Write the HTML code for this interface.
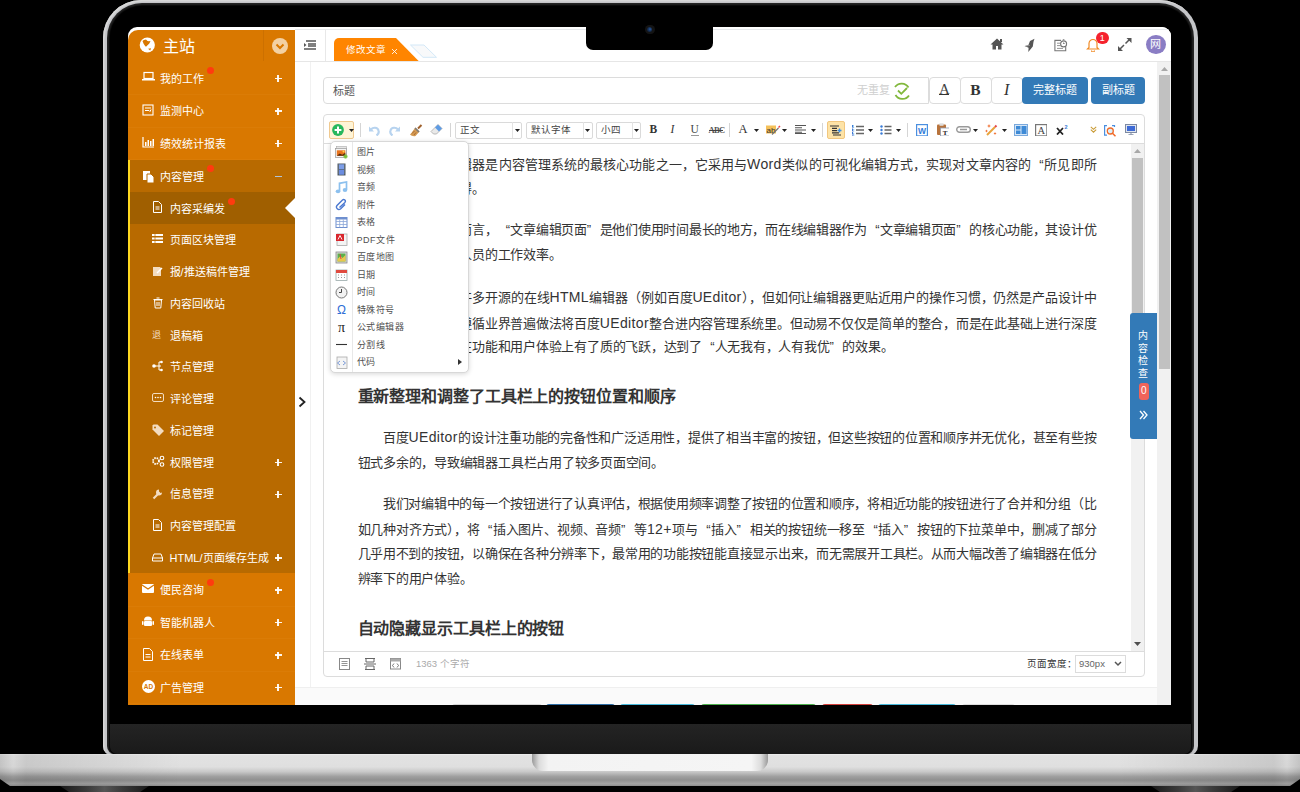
<!DOCTYPE html>
<html lang="zh-CN"><head><meta charset="utf-8"><style>
*{box-sizing:border-box;margin:0;padding:0}
html,body{width:1300px;height:792px;overflow:hidden;background:#000;font-family:"Liberation Sans",sans-serif}
.a{position:absolute}
.nw{white-space:nowrap}
#lid{left:103px;top:0;width:1095px;height:756px;border-radius:38px 38px 10px 10px;background:#c4c5c8;box-shadow:inset 1.5px 1.5px 1px #d8d8d8}
#lidin{left:107px;top:3px;width:1087px;height:751px;border-radius:35px 35px 8px 8px;background:#262626}
#lidin2{left:110px;top:6px;width:1081px;height:748px;border-radius:32px 32px 6px 6px;background:#000;box-shadow:0 0 2px 1px #000}
#chin{left:110px;top:724px;width:1081px;height:30px;border-radius:0 0 7px 7px;background:linear-gradient(180deg,#242424,#1a1a1a)}
#base{left:0;top:754px;width:1300px;height:32px;background:linear-gradient(90deg,rgba(0,0,0,.13) 0,rgba(0,0,0,.04) 1%,rgba(0,0,0,.1) 2%,rgba(0,0,0,0) 14%,rgba(0,0,0,0) 86%,rgba(0,0,0,.1) 98%,rgba(0,0,0,.04) 99%,rgba(0,0,0,.13) 100%),linear-gradient(180deg,#efefef 0,#e2e2e2 5%,#dfdfdf 40%,#c9c9c9 55%,#a0a0a0 70%,#8f8f8f 82%,#a3a3a3 93%,#8c8c8c 100%);clip-path:polygon(0 0,100% 0,100% 78%,calc(100% - 10px) 100%,10px 100%,0 78%)}
#notch{left:532px;top:754px;width:236px;height:16.5px;border-radius:0 0 11px 11px;background:linear-gradient(90deg,#9a9a9a 0%,#dcdcdc 3%,#f3f3f3 7%,#f5f5f5 93%,#dcdcdc 97%,#9a9a9a 100%)}
.foot{top:786px;width:89px;height:6px;background:linear-gradient(90deg,#1a1a1a,#3a3a3a 30%,#555 50%,#3a3a3a 70%,#1a1a1a);clip-path:polygon(0 0,100% 0,90% 100%,10% 100%)}
#screen{left:128px;top:27px;width:1043px;height:678px;overflow:hidden;border-radius:9px 9px 0 0;background:#fff}
#pg{left:-128px;top:-27px;width:1300px;height:792px}
.si{color:#fff;font-size:11px;white-space:nowrap}
.pl{color:#fff;font-size:14px;font-weight:bold;line-height:14px}
.dot{width:7px;height:7px;border-radius:50%;background:#ff3b0f}

.tb{font-size:9.5px;color:#454545;white-space:nowrap}
.bt{border:1px solid #ddd;background:#fff}
.txt{font-size:12.75px;color:#333;white-space:nowrap;line-height:18px}
.jl{text-align:justify;text-align-last:justify}
.mi{font-size:9px;letter-spacing:.5px;color:#505050;white-space:nowrap;line-height:14px}
.ql{display:inline-block;width:12.7px;text-align:right;text-align-last:right;letter-spacing:0}.qr{display:inline-block;width:12.7px;text-align:left;text-align-last:left;letter-spacing:0}.lt{font-size:14px;letter-spacing:.35px}</style></head><body>
<div id="lid" class="a"></div><div id="lidin" class="a"></div><div id="lidin2" class="a"></div>
<div id="chin" class="a"></div><div id="base" class="a"></div><div id="notch" class="a"></div>
<div class="a foot" style="left:60px"></div><div class="a foot" style="left:1151px"></div>
<div id="screen" class="a"><div id="pg" class="a">
<div class="a" style="left:128px;top:29.8px;width:167px;height:676px;background:#d97800;border-radius:10px 0 0 0"></div>
<div class="a" style="left:262.5px;top:30px;width:1px;height:31px;background:#cc7000"></div>
<svg class="a" style="left:139px;top:37px" width="17" height="17" viewBox="0 0 17 17"><circle cx="8.3" cy="8" r="7.6" fill="#fff"/><path d="M3.5 4L4.9 2.9 7 2.4 8.5 4 9.7 4.3 11.5 4.1 10.3 6.4 8.5 8.2 7 9.7 6.1 9.1 4.6 6.7z" fill="#d97800"/><path d="M9.1 11.8l3-.6-.9 2.2z" fill="#d97800"/></svg>
<div class="a nw" style="left:163px;top:34.5px;font-size:16px;line-height:24px;color:#fff">主站</div>
<svg class="a" style="left:271.5px;top:37.5px" width="16" height="16" viewBox="0 0 16 16"><circle cx="8" cy="8" r="8" fill="#f3d1a3"/><path d="M4.5 6.5L8 10l3.5-3.5" stroke="#d97800" stroke-width="2" fill="none"/></svg>
<div class="a" style="left:128px;top:94.0px;width:167px;height:1px;background:#db7c06"></div>
<svg class="a" style="left:142px;top:71.2px" width="13" height="13" viewBox="0 0 13 13"><rect x="2" y="1.5" width="9" height="6" fill="none" stroke="#fff" stroke-width="1.2"/><rect x="0" y="8" width="13" height="1.5" fill="#fff"/></svg>
<div class="a si" style="left:160px;top:70.55px;line-height:16px">我的工作</div>
<div class="a" style="left:274.5px;top:77.95px;width:7px;height:1.3px;background:#fff;opacity:.93"></div><div class="a" style="left:277.35px;top:75.05px;width:1.3px;height:7px;background:#fff;opacity:.93"></div>
<div class="a dot" style="left:207.1px;top:66.5px"></div>
<div class="a" style="left:128px;top:126.5px;width:167px;height:1px;background:#db7c06"></div>
<svg class="a" style="left:142px;top:103.8px" width="13" height="13" viewBox="0 0 13 13"><rect x="1" y="1" width="10" height="10" fill="none" stroke="#fff" stroke-width="1.1"/><path d="M3 4h6M3 6.5h4l1 1 1-2" stroke="#fff" stroke-width="1" fill="none"/></svg>
<div class="a si" style="left:160px;top:103.05px;line-height:16px">监测中心</div>
<div class="a" style="left:274.5px;top:110.45px;width:7px;height:1.3px;background:#fff;opacity:.93"></div><div class="a" style="left:277.35px;top:107.55px;width:1.3px;height:7px;background:#fff;opacity:.93"></div>
<div class="a" style="left:128px;top:159.0px;width:167px;height:1px;background:#db7c06"></div>
<svg class="a" style="left:142px;top:136.2px" width="13" height="13" viewBox="0 0 13 13"><path d="M1 1v10h11" stroke="#fff" stroke-width="1.2" fill="none"/><rect x="3" y="6" width="1.5" height="4" fill="#fff"/><rect x="5.5" y="4" width="1.5" height="6" fill="#fff"/><rect x="8" y="5" width="1.5" height="5" fill="#fff"/><rect x="10.5" y="3" width="1.5" height="7" fill="#fff"/></svg>
<div class="a si" style="left:160px;top:135.55px;line-height:16px">绩效统计报表</div>
<div class="a" style="left:274.5px;top:142.95px;width:7px;height:1.3px;background:#fff;opacity:.93"></div><div class="a" style="left:277.35px;top:140.05px;width:1.3px;height:7px;background:#fff;opacity:.93"></div>
<div class="a" style="left:128px;top:159.5px;width:167px;height:413.5px;background:#b86a00"></div>
<div class="a" style="left:128px;top:192px;width:167px;height:31.75px;background:#a05f00"></div>
<div class="a" style="left:128px;top:159.5px;width:2.2px;height:413.5px;background:#ffd91f"></div>
<svg class="a" style="left:142px;top:169.5px" width="13" height="13" viewBox="0 0 13 13"><rect x="1" y="1" width="7" height="9" fill="#fff"/><path d="M5 4h4l3 3v6H5z" fill="#fff" stroke="#b86a00" stroke-width="1"/></svg>
<div class="a si" style="left:160px;top:168.8px;line-height:16px">内容管理</div>
<div class="a" style="left:275px;top:176.2px;width:6.5px;height:1.2px;background:#b0c4d8"></div>
<div class="a dot" style="left:206.9px;top:164.5px"></div>
<svg class="a" style="left:151.5px;top:201.4px" width="13" height="13" viewBox="0 0 13 13"><path d="M1.5 .5h5l3 3v8h-8z" fill="none" stroke="#fff" stroke-width="1"/><path d="M3.5 6h4M3.5 8h4" stroke="#fff" stroke-width="1"/></svg>
<div class="a si" style="left:169.5px;top:200.675px;line-height:16px">内容采编发</div>
<div class="a dot" style="left:227.9px;top:197.5px"></div>
<svg class="a" style="left:151.5px;top:233.1px" width="13" height="13" viewBox="0 0 13 13"><rect x="0" y="1" width="11" height="2" fill="#fff"/><rect x="0" y="4.5" width="11" height="2" fill="#fff"/><rect x="0" y="8" width="11" height="2" fill="#fff"/><path d="M3 1v9" stroke="#b86a00" stroke-width=".7"/></svg>
<div class="a si" style="left:169.5px;top:232.425px;line-height:16px">页面区块管理</div>
<svg class="a" style="left:151.5px;top:264.9px" width="13" height="13" viewBox="0 0 13 13"><path d="M1 2h7l1 1v8H1z" fill="#f3dcc0"/><path d="M5 8l5-5" stroke="#fff" stroke-width="1.5"/></svg>
<div class="a si" style="left:169.5px;top:264.175px;line-height:16px">报/推送稿件管理</div>
<svg class="a" style="left:151.5px;top:296.6px" width="13" height="13" viewBox="0 0 13 13"><path d="M2.5 3h7l-.7 8h-5.6z" fill="none" stroke="#fff" stroke-width="1"/><path d="M1.5 2.5h9M4.5 1h3M5 5v4M7 5v4" stroke="#fff" stroke-width="1"/></svg>
<div class="a si" style="left:169.5px;top:295.925px;line-height:16px">内容回收站</div>
<svg class="a" style="left:151.5px;top:328.4px" width="13" height="13" viewBox="0 0 13 13"><text x="0" y="10" font-size="9" fill="#f3dcc0">退</text></svg>
<div class="a si" style="left:169.5px;top:327.675px;line-height:16px">退稿箱</div>
<svg class="a" style="left:151.5px;top:360.1px" width="13" height="13" viewBox="0 0 13 13"><circle cx="2" cy="6" r="1.8" fill="#fff"/><path d="M3 6h4M7 2v8M7 2h2M7 6h2M7 10h2" stroke="#fff" stroke-width="1"/><circle cx="9.5" cy="2" r="1.3" fill="#fff"/><circle cx="9.5" cy="10" r="1.3" fill="#fff"/></svg>
<div class="a si" style="left:169.5px;top:359.425px;line-height:16px">节点管理</div>
<svg class="a" style="left:151.5px;top:391.9px" width="13" height="13" viewBox="0 0 13 13"><rect x=".5" y="1.5" width="11" height="8" rx="1.5" fill="none" stroke="#f3dcc0" stroke-width="1"/><circle cx="3.5" cy="5.5" r=".8" fill="#fff"/><circle cx="6" cy="5.5" r=".8" fill="#fff"/><circle cx="8.5" cy="5.5" r=".8" fill="#fff"/></svg>
<div class="a si" style="left:169.5px;top:391.175px;line-height:16px">评论管理</div>
<svg class="a" style="left:151.5px;top:423.6px" width="13" height="13" viewBox="0 0 13 13"><path d="M.5 1.5v4l6.5 6.5 5-5L5.5.5h-4z" fill="#f3dcc0"/><circle cx="3" cy="3.5" r="1" fill="#b86a00"/></svg>
<div class="a si" style="left:169.5px;top:422.925px;line-height:16px">标记管理</div>
<svg class="a" style="left:151.5px;top:455.4px" width="13" height="13" viewBox="0 0 13 13"><circle cx="4" cy="6" r="3" fill="none" stroke="#fff" stroke-width="1.8" stroke-dasharray="1.5 .9"/><circle cx="10" cy="3" r="1.8" fill="none" stroke="#fff" stroke-width="1.1"/><circle cx="10" cy="9.5" r="1.8" fill="none" stroke="#fff" stroke-width="1.1"/></svg>
<div class="a si" style="left:169.5px;top:454.675px;line-height:16px">权限管理</div>
<div class="a" style="left:274.5px;top:462.075px;width:7px;height:1.3px;background:#fff;opacity:.93"></div><div class="a" style="left:277.35px;top:459.175px;width:1.3px;height:7px;background:#fff;opacity:.93"></div>
<svg class="a" style="left:151.5px;top:487.1px" width="13" height="13" viewBox="0 0 13 13"><path d="M1.5 11.5l6-6" stroke="#f3dcc0" stroke-width="2.2"/><path d="M7 2.5a3 3 0 1 0 3 3l-1.5 .5-1.5-1.5z" fill="#f3dcc0"/></svg>
<div class="a si" style="left:169.5px;top:486.425px;line-height:16px">信息管理</div>
<div class="a" style="left:274.5px;top:493.825px;width:7px;height:1.3px;background:#fff;opacity:.93"></div><div class="a" style="left:277.35px;top:490.925px;width:1.3px;height:7px;background:#fff;opacity:.93"></div>
<svg class="a" style="left:151.5px;top:518.9px" width="13" height="13" viewBox="0 0 13 13"><path d="M1.5 .5h5l3 3v8h-8z" fill="none" stroke="#fff" stroke-width="1"/><path d="M3.5 6h4M3.5 8h4" stroke="#fff" stroke-width="1"/></svg>
<div class="a si" style="left:169.5px;top:518.175px;line-height:16px">内容管理配置</div>
<svg class="a" style="left:151.5px;top:550.6px" width="13" height="13" viewBox="0 0 13 13"><path d="M2 3h7l1.5 4v3h-10V7z" fill="none" stroke="#fff" stroke-width="1"/><path d="M1 7h10" stroke="#fff" stroke-width="1"/></svg>
<div class="a si" style="left:169.5px;top:549.925px;line-height:16px">HTML/页面缓存生成</div>
<div class="a" style="left:274.5px;top:557.325px;width:7px;height:1.3px;background:#fff;opacity:.93"></div><div class="a" style="left:277.35px;top:554.425px;width:1.3px;height:7px;background:#fff;opacity:.93"></div>
<svg class="a" style="left:285px;top:198px" width="10" height="20" viewBox="0 0 10 20"><path d="M10 0L0 10l10 10z" fill="#fff"/></svg>
<div class="a" style="left:128px;top:605.5px;width:167px;height:1px;background:#db7c06"></div>
<svg class="a" style="left:142px;top:582.8px" width="13" height="13" viewBox="0 0 13 13"><rect x="0" y="1" width="12" height="9" rx="1" fill="#fff"/><path d="M0 2l6 4 6-4" stroke="#d97800" stroke-width="1.2" fill="none"/></svg>
<div class="a si" style="left:160px;top:582.05px;line-height:16px">便民咨询</div>
<div class="a" style="left:274.5px;top:589.45px;width:7px;height:1.3px;background:#fff;opacity:.93"></div><div class="a" style="left:277.35px;top:586.55px;width:1.3px;height:7px;background:#fff;opacity:.93"></div>
<div class="a dot" style="left:207.3px;top:578.5px"></div>
<div class="a" style="left:128px;top:638.0px;width:167px;height:1px;background:#db7c06"></div>
<svg class="a" style="left:142px;top:615.2px" width="13" height="13" viewBox="0 0 13 13"><path d="M2 5.5a4 4 0 0 1 8 0z" fill="#fff"/><rect x="2" y="6" width="8" height="5" rx="1" fill="#fff"/><rect x="0" y="6" width="1.5" height="4" rx=".7" fill="#fff"/><rect x="10.5" y="6" width="1.5" height="4" rx=".7" fill="#fff"/></svg>
<div class="a si" style="left:160px;top:614.55px;line-height:16px">智能机器人</div>
<div class="a" style="left:274.5px;top:621.95px;width:7px;height:1.3px;background:#fff;opacity:.93"></div><div class="a" style="left:277.35px;top:619.05px;width:1.3px;height:7px;background:#fff;opacity:.93"></div>
<div class="a" style="left:128px;top:670.5px;width:167px;height:1px;background:#db7c06"></div>
<svg class="a" style="left:142px;top:647.8px" width="13" height="13" viewBox="0 0 13 13"><path d="M1.5 .5h6l3 3v9h-9z" fill="none" stroke="#fff" stroke-width="1"/><path d="M3.5 6.5h5M3.5 9h5" stroke="#fff" stroke-width="1"/></svg>
<div class="a si" style="left:160px;top:647.05px;line-height:16px">在线表单</div>
<div class="a" style="left:274.5px;top:654.45px;width:7px;height:1.3px;background:#fff;opacity:.93"></div><div class="a" style="left:277.35px;top:651.55px;width:1.3px;height:7px;background:#fff;opacity:.93"></div>
<div class="a" style="left:128px;top:703.0px;width:167px;height:1px;background:#db7c06"></div>
<svg class="a" style="left:142px;top:680.2px" width="13" height="13" viewBox="0 0 13 13"><circle cx="6.5" cy="6.5" r="6.5" fill="#fff"/><text x="6.5" y="9" font-size="6.5" font-weight="bold" text-anchor="middle" fill="#d97800" font-family="Liberation Sans">AD</text></svg>
<div class="a si" style="left:160px;top:679.55px;line-height:16px">广告管理</div>
<div class="a" style="left:274.5px;top:686.95px;width:7px;height:1.3px;background:#fff;opacity:.93"></div><div class="a" style="left:277.35px;top:684.05px;width:1.3px;height:7px;background:#fff;opacity:.93"></div>
<div class="a" style="left:295px;top:27px;width:876px;height:678px;background:#fff"></div>
<div class="a" style="left:295px;top:28.8px;width:876px;height:1px;background:#e6e9ed"></div>
<div class="a" style="left:295px;top:61px;width:876px;height:1px;background:#e6e6e6"></div>
<div class="a" style="left:325px;top:29px;width:1px;height:32px;background:#e8e8e8"></div>
<svg class="a" style="left:303px;top:40px" width="14" height="10" viewBox="0 0 14 10"><path d="M3 1h10M5 4h8M5 6h8M1 9h12" stroke="#555" stroke-width="1.3"/><path d="M1 3l2.5 2L1 7z" fill="#555"/></svg>
<svg class="a" style="left:333.5px;top:37.8px" width="86" height="23.7" viewBox="0 0 86 23.7"><path d="M0 23.7V5a5 5 0 0 1 5-5h57l23.3 23.7z" fill="#ff8500"/></svg>
<div class="a nw" style="left:345.5px;top:42.8px;font-size:9.5px;line-height:14px;color:#fff">修改文章</div>
<svg class="a" style="left:391px;top:47.5px" width="7" height="7" viewBox="0 0 7 7"><path d="M1 1l5 5M6 1l-5 5" stroke="#fff" stroke-width=".85"/></svg>
<svg class="a" style="left:409px;top:43.5px" width="30" height="15" viewBox="0 0 30 15"><path d="M1.5 1h13.5l12.5 12.3h-13.5z" fill="#f8f9fa" stroke="#d3e8f7" stroke-width="1" stroke-linejoin="round"/></svg>
<svg class="a" style="left:990px;top:38px" width="14" height="12" viewBox="0 0 14 12"><path d="M7 .5L.5 6.5h2v5h3.5V8h2v3.5h3.5v-5h2z" fill="#555"/><rect x="10" y="1" width="2" height="3" fill="#555"/></svg>
<svg class="a" style="left:1022px;top:37px" width="14" height="16" viewBox="0 0 14 16"><path d="M12.5 1.7L8 4.1 6.3 8.2 2.5 8.9 6.6 10.7 6.3 15 10.8 9.6 11.5 4.8z" fill="#555"/><path d="M4 9.3l4-1" stroke="#aaa" stroke-width=".6"/></svg>
<svg class="a" style="left:1053px;top:38px" width="15" height="14" viewBox="0 0 15 14"><path d="M8 2.4H1.9v10.4h10.8V9" fill="none" stroke="#777" stroke-width="1.1"/><path d="M4 5.2h3M4 7.6h3.5M4 10.4h6" stroke="#888" stroke-width=".9"/><circle cx="10.6" cy="5.9" r="3" fill="#fff" stroke="#777" stroke-width="1.1"/><path d="M10.6 4.5v1.5l1-1M9.8 1.7h1.6" stroke="#777" stroke-width=".9" fill="none"/></svg>
<svg class="a" style="left:1086px;top:38px" width="14" height="14" viewBox="0 0 14 14"><path d="M7 1.5a4 4 0 0 0-4 4v4L1.5 11h11L11 9.5v-4a4 4 0 0 0-4-4z" fill="none" stroke="#f08a24" stroke-width="1.2"/><path d="M5.5 12.5a1.5 1.5 0 0 0 3 0" stroke="#f08a24" stroke-width="1.1" fill="none"/></svg>
<div class="a" style="left:1096px;top:31.5px;width:12.5px;height:12.5px;border-radius:50%;background:#f5222d;color:#fff;font-size:9px;line-height:12.5px;text-align:center">1</div>
<svg class="a" style="left:1117px;top:37px" width="15" height="15" viewBox="0 0 15 15"><path d="M8.5 6.5l5-5M2 13l5-5" stroke="#555" stroke-width="1.5"/><path d="M9.5 1h5v5z M1 9v5h5z" fill="#555"/></svg>
<div class="a" style="left:1146px;top:35px;width:19.5px;height:19px;border-radius:50%;background:#8a7dc4;color:#fff;font-size:11px;line-height:19px;text-align:center">网</div>
<div class="a" style="left:310px;top:62px;width:1px;height:625px;background:#f1f1f1"></div>
<div class="a" style="left:295px;top:687px;width:862px;height:18px;background:#fafafa;border-top:1px solid #efefef"></div>
<div class="a" style="left:1157px;top:62px;width:14px;height:643px;background:#f1f1f1"></div>
<svg class="a" style="left:1160.5px;top:67px" width="7" height="4" viewBox="0 0 7 4"><path d="M0 4L3.5 0 7 4z" fill="#a8a8a8"/></svg>
<div class="a" style="left:1159px;top:75px;width:10.5px;height:294px;background:#c1c1c1"></div>
<div class="a" style="left:322.5px;top:77px;width:606px;height:26.5px;border:1px solid #dcdcdc;border-radius:4px 0 0 4px"></div>
<div class="a nw" style="left:333px;top:84px;font-size:11px;line-height:14px;color:#555">标题</div>
<div class="a nw" style="left:856.5px;top:83px;font-size:11px;line-height:14px;color:#cfcfcf">无重复</div>
<svg class="a" style="left:892px;top:81px" width="20" height="20" viewBox="0 0 20 20"><path d="M16.5 6.5A8 8 0 0 0 3 6M3.5 14a8 8 0 0 0 13.5 .5" stroke="#82b83d" stroke-width="1.8" fill="none"/><path d="M6 9.5l3.3 3.3L15 7" stroke="#82b83d" stroke-width="1.8" fill="none"/></svg>
<div class="a" style="left:928.5px;top:76.5px;width:32.0px;height:27px;border:1.3px solid #dcdcdc;border-radius:4px;background:#fff;text-align:center;line-height:23px;color:#333;font-family:Liberation Serif;font-size:15px;color:#444">A</div>
<div class="a" style="left:959.5px;top:76.5px;width:32.0px;height:27px;border:1.3px solid #dcdcdc;border-radius:4px;background:#fff;text-align:center;line-height:23px;color:#333;font-family:Liberation Serif;font-weight:bold;font-size:15.5px">B</div>
<div class="a" style="left:990.5px;top:76.5px;width:32.5px;height:27px;border:1.3px solid #dcdcdc;border-radius:4px;background:#fff;text-align:center;line-height:23px;color:#333;font-family:Liberation Serif;font-style:italic;font-size:16px">I</div>
<div class="a" style="left:938.5px;top:93.6px;width:10.5px;height:1.8px;background:#333"></div>
<div class="a" style="left:1022px;top:76.5px;width:65.5px;height:27px;border-radius:4px;background:#337ab7;color:#fff;font-size:11px;line-height:27px;text-align:center">完整标题</div>
<div class="a" style="left:1091px;top:76.5px;width:54px;height:27px;border-radius:4px;background:#337ab7;color:#fff;font-size:11px;line-height:27px;text-align:center">副标题</div>
<div class="a" style="left:322.5px;top:113.5px;width:822px;height:563px;border:1px solid #dcdcdc;border-radius:4px"></div>
<div class="a" style="left:323px;top:143px;width:821px;height:1px;background:#dcdcdc"></div>
<div class="a" style="left:323px;top:651px;width:821px;height:1px;background:#dcdcdc"></div>
<div class="a" style="left:1131px;top:144px;width:13px;height:507px;background:#f1f1f1"></div>
<svg class="a" style="left:1134px;top:149px" width="7" height="4" viewBox="0 0 7 4"><path d="M0 4L3.5 0 7 4z" fill="#a8a8a8"/></svg>
<svg class="a" style="left:1134px;top:642px" width="7" height="4" viewBox="0 0 7 4"><path d="M0 0l3.5 4L7 0z" fill="#505050"/></svg>
<div class="a" style="left:1132px;top:158px;width:10.5px;height:240px;background:#c1c1c1"></div>
<svg class="a" style="left:298px;top:396px" width="9" height="12" viewBox="0 0 9 12"><path d="M1.5 1.5L6.5 6l-5 4.5" stroke="#222" stroke-width="1.8" fill="none"/></svg>
<div class="a txt jl" style="left:459.3px;top:155.20000000000002px;width:636.7px;font-size:13px;letter-spacing:-0.6px;color:#333">辑器是内容管理系统的最核心功能之一，它采用与<span class="lt">Word</span>类似的可视化编辑方式，实现对文章内容的<span class="ql">“</span>所见即所</div>
<div class="a txt" style="left:459.3px;top:180.3px;font-size:13px;letter-spacing:-0.23px;color:#333">得。</div>
<div class="a txt jl" style="left:459.3px;top:221.10000000000002px;width:636.7px;font-size:13px;letter-spacing:-0.6px;color:#333">而言，<span class="ql">“</span>文章编辑页面<span class="qr">”</span>是他们使用时间最长的地方，而在线编辑器作为<span class="ql">“</span>文章编辑页面<span class="qr">”</span>的核心功能，其设计优</div>
<div class="a txt" style="left:459.3px;top:246.10000000000002px;font-size:13px;letter-spacing:-0.23px;color:#333">人员的工作效率。</div>
<div class="a txt jl" style="left:459.3px;top:287.90000000000003px;width:636.7px;font-size:13px;letter-spacing:-0.6px;color:#333">许多开源的在线<span class="lt">HTML</span>编辑器（例如百度<span class="lt">UEditor</span>），但如何让编辑器更贴近用户的操作习惯，仍然是产品设计中</div>
<div class="a txt jl" style="left:459.3px;top:313.5px;width:636.7px;font-size:13px;letter-spacing:-0.6px;color:#333">遵循业界普遍做法将百度<span class="lt">UEditor</span>整合进内容管理系统里。但动易不仅仅是简单的整合，而是在此基础上进行深度</div>
<div class="a txt" style="left:459.3px;top:338.3px;font-size:13px;letter-spacing:-0.23px;color:#333">在功能和用户体验上有了质的飞跃，达到了<span class="ql">“</span>人无我有，人有我优<span class="qr">”</span>的效果。</div>
<div class="a txt" style="left:357.5px;top:388.1px;font-size:16px;letter-spacing:-0.1px;font-weight:bold;color:#333">重新整理和调整了工具栏上的按钮位置和顺序</div>
<div class="a txt jl" style="left:383px;top:428.3px;width:713px;font-size:13px;letter-spacing:-0.6px;color:#333">百度<span class="lt">UEditor</span>的设计注重功能的完备性和广泛适用性，提供了相当丰富的按钮，但这些按钮的位置和顺序并无优化，甚至有些按</div>
<div class="a txt" style="left:357.5px;top:453.5px;font-size:13px;letter-spacing:-0.23px;color:#333">钮式多余的，导致编辑器工具栏占用了较多页面空间。</div>
<div class="a txt jl" style="left:383px;top:495.1px;width:713px;font-size:13px;letter-spacing:-0.6px;color:#333">我们对编辑中的每一个按钮进行了认真评估，根据使用频率调整了按钮的位置和顺序，将相近功能的按钮进行了合并和分组（比</div>
<div class="a txt jl" style="left:357.5px;top:520.0999999999999px;width:738.5px;font-size:13px;letter-spacing:-0.6px;color:#333">如几种对齐方式），将<span class="ql">“</span>插入图片、视频、音频<span class="qr">”</span>等<span class="lt">12+</span>项与<span class="ql">“</span>插入<span class="qr">”</span>相关的按钮统一移至<span class="ql">“</span>插入<span class="qr">”</span>按钮的下拉菜单中，删减了部分</div>
<div class="a txt jl" style="left:357.5px;top:545.4px;width:738.5px;font-size:13px;letter-spacing:-0.6px;color:#333">几乎用不到的按钮，以确保在各种分辨率下，最常用的功能按钮能直接显示出来，而无需展开工具栏。从而大幅改善了编辑器在低分</div>
<div class="a txt" style="left:357.5px;top:570.3px;font-size:13px;letter-spacing:-0.23px;color:#333">辨率下的用户体验。</div>
<div class="a txt" style="left:357.5px;top:620.3px;font-size:16px;letter-spacing:-0.1px;font-weight:bold;color:#333">自动隐藏显示工具栏上的按钮</div>
<div class="a" style="left:329px;top:121px;width:25px;height:17.5px;background:#fff4d6;border:1px solid #f0c98f;border-radius:2px"></div>
<svg class="a" style="left:331.5px;top:123.5px" width="12" height="12" viewBox="0 0 12 12"><circle cx="6" cy="6" r="5.9" fill="#27b75c"/><path d="M6 2.6v6.8M2.6 6h6.8" stroke="#fff" stroke-width="2"/></svg>
<svg class="a" style="left:348.5px;top:129px" width="5" height="3" viewBox="0 0 5 3"><path d="M0 0h5L2.5 3z" fill="#222"/></svg>
<div class="a" style="left:359.5px;top:123px;width:1px;height:14px;background:#d5d5d5"></div>
<svg class="a" style="left:368px;top:124.5px" width="12" height="11" viewBox="0 0 12 11"><path d="M3 4.5c2-2.5 6.5-2.5 7.5 1 .8 2.5-.5 4-2 5" stroke="#b7d3ef" stroke-width="2.2" fill="none"/><path d="M1 1.5v5h5z" fill="#b7d3ef"/></svg>
<svg class="a" style="left:389px;top:124.5px" width="12" height="11" viewBox="0 0 12 11"><path d="M9 4.5c-2-2.5-6.5-2.5-7.5 1-.8 2.5.5 4 2 5" stroke="#b7d3ef" stroke-width="2.2" fill="none"/><path d="M11 1.5v5H6z" fill="#b7d3ef"/></svg>
<svg class="a" style="left:408.5px;top:123.5px" width="14" height="13" viewBox="0 0 14 13"><path d="M12.5 1L9 4.5" stroke="#a0612c" stroke-width="2"/><path d="M6.5 3.5l4 4-4 4.5c-2 .5-4 0-5.5-1.5 1.5-1 2-3 5.5-7z" fill="#d49a52"/><path d="M6 4l4 4" stroke="#7a7a7a" stroke-width="1.6"/><path d="M3 9.5l2.5-2.5M5 11l2-2.5" stroke="#a0612c" stroke-width=".8"/></svg>
<svg class="a" style="left:429.5px;top:123px" width="13" height="13" viewBox="0 0 13 13"><path d="M8 1.5l4 4L6.5 11h-3L1 8.5z" fill="#e9e9e9" stroke="#aaa" stroke-width=".8"/><path d="M8 1.5l4 4-3 3-4-4z" fill="#5e9be3"/></svg>
<div class="a" style="left:449.5px;top:123px;width:1px;height:14px;background:#d5d5d5"></div>
<div class="a" style="left:454.5px;top:121.5px;width:67.0px;height:17px;border:1px solid #dadada;border-radius:2px"></div>
<div class="a" style="left:512px;top:122px;width:1px;height:16px;background:#e3e3e3"></div>
<div class="a tb" style="left:459.5px;top:123px;line-height:14px">正文</div>
<svg class="a" style="left:514.5px;top:128.5px" width="5" height="3" viewBox="0 0 5 3"><path d="M0 0h5L2.5 3z" fill="#222"/></svg>
<div class="a" style="left:525.5px;top:121.5px;width:67.0px;height:17px;border:1px solid #dadada;border-radius:2px"></div>
<div class="a" style="left:582.5px;top:122px;width:1px;height:16px;background:#e3e3e3"></div>
<div class="a tb" style="left:530.5px;top:123px;line-height:14px">默认字体</div>
<svg class="a" style="left:585.0px;top:128.5px" width="5" height="3" viewBox="0 0 5 3"><path d="M0 0h5L2.5 3z" fill="#222"/></svg>
<div class="a" style="left:596px;top:121.5px;width:45px;height:17px;border:1px solid #dadada;border-radius:2px"></div>
<div class="a" style="left:631.5px;top:122px;width:1px;height:16px;background:#e3e3e3"></div>
<div class="a tb" style="left:601px;top:123px;line-height:14px">小四</div>
<svg class="a" style="left:634.0px;top:128.5px" width="5" height="3" viewBox="0 0 5 3"><path d="M0 0h5L2.5 3z" fill="#222"/></svg>
<div class="a nw" style="left:649.5px;top:122px;font-family:Liberation Serif;font-weight:bold;font-size:11.5px;line-height:14px;color:#333">B</div>
<div class="a nw" style="left:670.5px;top:122px;font-family:Liberation Serif;font-style:italic;font-size:11.5px;line-height:14px;color:#333">I</div>
<div class="a nw" style="left:690.5px;top:122px;font-family:Liberation Serif;font-size:11.5px;line-height:14px;color:#444">U</div>
<div class="a" style="left:691px;top:135px;width:8px;height:1px;background:#999"></div>
<div class="a nw" style="left:708.5px;top:124.5px;font-family:Liberation Serif;font-weight:bold;font-size:8.5px;line-height:10px;color:#555;letter-spacing:-.6px">ABC</div>
<div class="a" style="left:708.5px;top:129.5px;width:14px;height:1px;background:#444"></div>
<div class="a" style="left:728.5px;top:123px;width:1px;height:14px;background:#d5d5d5"></div>
<div class="a nw" style="left:738.5px;top:122px;font-family:Liberation Serif;font-size:12.5px;line-height:14px;color:#333">A</div>
<svg class="a" style="left:753.5px;top:128.5px" width="5" height="3" viewBox="0 0 5 3"><path d="M0 0h5L2.5 3z" fill="#222"/></svg>
<svg class="a" style="left:765.5px;top:124px" width="16" height="12" viewBox="0 0 16 12"><rect x="0" y="1.5" width="10" height="8" fill="#f5c15a"/><text x=".5" y="8.5" font-size="8" font-family="Liberation Sans" fill="#333">ab</text><path d="M6 10.5L12.5 4" stroke="#777" stroke-width="1.3"/><path d="M12 3l1.5-1.5 1 1L13 4z" fill="#e44"/></svg>
<svg class="a" style="left:782px;top:128.5px" width="5" height="3" viewBox="0 0 5 3"><path d="M0 0h5L2.5 3z" fill="#222"/></svg>
<svg class="a" style="left:795px;top:125px" width="12" height="9" viewBox="0 0 12 9"><path d="M0 .5h11M0 2.8h7M0 5h11M0 7.3h7M0 8.5h11" stroke="#555" stroke-width="1.1"/></svg>
<svg class="a" style="left:810.5px;top:128.5px" width="5" height="3" viewBox="0 0 5 3"><path d="M0 0h5L2.5 3z" fill="#222"/></svg>
<div class="a" style="left:821.5px;top:123px;width:1px;height:14px;background:#d5d5d5"></div>
<div class="a" style="left:827px;top:121.2px;width:18px;height:17.6px;background:#fde3a7;border:1px solid #f2c77e;border-radius:2px"></div>
<svg class="a" style="left:830px;top:124.5px" width="12" height="11" viewBox="0 0 12 11"><path d="M0 1h9M2 3.3h5M2 5.6h5M2 7.9h7M3 10h8" stroke="#333" stroke-width="1.2"/><path d="M9.5 3.5v4M7.5 5.5h4" stroke="#3a8ee6" stroke-width="1.4"/></svg>
<svg class="a" style="left:851.5px;top:124px" width="12" height="12" viewBox="0 0 12 12"><path d="M4 2.5h8M4 6h8M4 9.5h8" stroke="#666" stroke-width="1.3"/><text x="0" y="4" font-size="4" fill="#3a7bd5" font-family="Liberation Sans">1</text><text x="0" y="8" font-size="4" fill="#3a7bd5" font-family="Liberation Sans">2</text><text x="0" y="12" font-size="4" fill="#3a7bd5" font-family="Liberation Sans">3</text><path d="M.5 1v11" stroke="#3a7bd5" stroke-width="1.2" stroke-dasharray="2.5 1"/></svg>
<svg class="a" style="left:867.5px;top:128.5px" width="5" height="3" viewBox="0 0 5 3"><path d="M0 0h5L2.5 3z" fill="#222"/></svg>
<svg class="a" style="left:880px;top:124px" width="12" height="12" viewBox="0 0 12 12"><path d="M4.5 2.5h7M4.5 6h7M4.5 9.5h7" stroke="#666" stroke-width="1.3"/><circle cx="1.5" cy="2.5" r="1.2" fill="#3a7bd5"/><circle cx="1.5" cy="6" r="1.2" fill="#3a7bd5"/><circle cx="1.5" cy="9.5" r="1.2" fill="#3a7bd5"/></svg>
<svg class="a" style="left:895.5px;top:128.5px" width="5" height="3" viewBox="0 0 5 3"><path d="M0 0h5L2.5 3z" fill="#222"/></svg>
<div class="a" style="left:906.5px;top:123px;width:1px;height:14px;background:#d5d5d5"></div>
<svg class="a" style="left:915.5px;top:123.5px" width="12" height="12.5" viewBox="0 0 12 12.5"><rect x=".6" y=".6" width="10.8" height="11.3" fill="#fff" stroke="#4a8fe0" stroke-width="1.2"/><text x="6" y="10" font-size="8.5" font-weight="bold" text-anchor="middle" fill="#2f7ad8" font-family="Liberation Sans">W</text></svg>
<svg class="a" style="left:936.5px;top:123px" width="12.5" height="13" viewBox="0 0 12.5 13"><rect x="0" y="1.5" width="9" height="10.5" rx="1" fill="#b8733c"/><rect x="2.5" y=".3" width="4" height="2.5" fill="#ddd"/><rect x="3.5" y="5" width="9" height="8" fill="#fff" stroke="#8e9bb0" stroke-width=".8"/><text x="8" y="12" font-size="7" font-weight="bold" text-anchor="middle" fill="#222" font-family="Liberation Serif">T</text></svg>
<svg class="a" style="left:955.5px;top:126px" width="15" height="7" viewBox="0 0 15 7"><rect x=".7" y=".7" width="13.6" height="5.6" rx="2.8" fill="none" stroke="#9a9a9a" stroke-width="1.4"/><path d="M4 3.5h7" stroke="#9a9a9a" stroke-width="1.4"/></svg>
<svg class="a" style="left:972.5px;top:128.5px" width="5" height="3" viewBox="0 0 5 3"><path d="M0 0h5L2.5 3z" fill="#222"/></svg>
<svg class="a" style="left:985px;top:123px" width="13" height="13" viewBox="0 0 13 13"><path d="M2 12l8-8" stroke="#e8a33c" stroke-width="2"/><path d="M10 4l1.5-1.5" stroke="#e5484d" stroke-width="2"/><path d="M4 1l.6 1.4 1.4.6-1.4.6L4 5l-.6-1.4L2 3l1.4-.6zM1.5 6.5l.5 1 1 .5-1 .5-.5 1-.5-1-1-.5 1-.5zM10 9l.5 1 1 .5-1 .5-.5 1-.5-1-1-.5 1-.5z" fill="#f06a28"/></svg>
<svg class="a" style="left:1001.5px;top:128.5px" width="5" height="3" viewBox="0 0 5 3"><path d="M0 0h5L2.5 3z" fill="#222"/></svg>
<svg class="a" style="left:1013.5px;top:123.5px" width="14" height="12" viewBox="0 0 14 12"><rect x=".5" y=".5" width="13" height="11" fill="#d6e6f7" stroke="#7aa9dc" stroke-width="1"/><rect x="2" y="2" width="4.5" height="3.5" fill="#3e8ad6"/><rect x="2" y="6.5" width="4.5" height="3.5" fill="#3e8ad6"/><rect x="7.5" y="2" width="5" height="8" fill="#3e8ad6"/></svg>
<svg class="a" style="left:1034.5px;top:123.5px" width="12.5" height="12.5" viewBox="0 0 12.5 12.5"><rect x=".6" y=".6" width="11.3" height="11.3" fill="#fff" stroke="#777" stroke-width="1.2"/><text x="6.3" y="10.3" font-size="10.5" text-anchor="middle" fill="#444" font-family="Liberation Serif">A</text></svg>
<svg class="a" style="left:1056px;top:123.5px" width="12" height="11" viewBox="0 0 12 11"><path d="M1 4l6 6.5M7 4L1 10.5" stroke="#222" stroke-width="1.8"/><text x="8.5" y="5" font-size="5.5" font-weight="bold" fill="#3a7bd5" font-family="Liberation Sans">2</text></svg>
<svg class="a" style="left:1089.5px;top:126px" width="7" height="7" viewBox="0 0 7 7"><path d="M.8 .8l2.7 2.5L6.2 .8M.8 3.7l2.7 2.5 2.7-2.5" stroke="#c99b36" stroke-width="1.1" fill="none"/></svg>
<svg class="a" style="left:1103.5px;top:124.5px" width="12.5" height="12" viewBox="0 0 12.5 12"><path d="M3 .6H.6v9.5H3M8 .6h2.5v1.5" stroke="#4a8fe0" stroke-width="1.2" fill="none"/><circle cx="6.3" cy="6" r="3" fill="#d9f0fb" stroke="#f06a28" stroke-width="1.3"/><path d="M8.5 8.3l3 3" stroke="#f06a28" stroke-width="1.5"/></svg>
<svg class="a" style="left:1124.5px;top:123.5px" width="12" height="11.5" viewBox="0 0 12 11.5"><rect x=".5" y=".5" width="11" height="8" fill="#dfe5ee" stroke="#7d8aa3" stroke-width="1"/><rect x="2" y="2" width="8" height="5" fill="#3d6ad6"/><path d="M3.5 10.8h5" stroke="#7d8aa3" stroke-width="1.3"/><path d="M6 8.5v2" stroke="#7d8aa3" stroke-width="1"/></svg>
<div class="a" style="left:329.8px;top:140.8px;width:139.7px;height:232px;background:#fff;border:1px solid #d8d8d8;border-radius:5px;box-shadow:0 1px 5px rgba(0,0,0,.16)"></div>
<div class="a" style="left:352.3px;top:142px;width:1px;height:230px;background:#e8e8e8"></div>
<svg class="a" style="left:334.5px;top:145.5px" width="13" height="13" viewBox="0 0 13 13"><rect x="1.5" y=".5" width="10" height="8" fill="#e6e6e6" stroke="#aaa" stroke-width=".6"/><rect x=".5" y="2.5" width="11" height="9" fill="#f4f4f4" stroke="#999" stroke-width=".7"/><rect x="1.8" y="4.3" width="8.5" height="5.5" fill="#e8731c"/><path d="M1.8 9.8l3-2.3 2.5 1.2 3-2v3.1z" fill="#5a2a0a"/><circle cx="8.5" cy="5.5" r="1" fill="#ffd24a"/><path d="M10.5 8.5v4M8.5 10.5h4" stroke="#79c23a" stroke-width="2"/></svg>
<div class="a mi" style="left:356.5px;top:145.0px">图片</div>
<svg class="a" style="left:334.5px;top:163.0px" width="13" height="13" viewBox="0 0 13 13"><rect x="2.5" y=".5" width="8" height="12" fill="#4f5a66"/><rect x="4" y="1.3" width="5" height="4.9" fill="#7d9ee8"/><rect x="4" y="6.8" width="5" height="4.9" fill="#6b8de0"/><path d="M3.2 1.5v10M9.8 1.5v10" stroke="#9aa3ad" stroke-width=".7" stroke-dasharray="1 1"/></svg>
<div class="a mi" style="left:356.5px;top:162.5px">视频</div>
<svg class="a" style="left:334.5px;top:180.5px" width="13" height="13" viewBox="0 0 13 13"><path d="M4.5 10V2.3l7-1.3V8.7" stroke="#8cc0ee" stroke-width="1.7" fill="none"/><ellipse cx="3" cy="10.3" rx="2.3" ry="1.9" fill="#8cc0ee"/><ellipse cx="10" cy="9" rx="2.3" ry="1.9" fill="#8cc0ee"/></svg>
<div class="a mi" style="left:356.5px;top:180.0px">音频</div>
<svg class="a" style="left:334.5px;top:198.0px" width="13" height="13" viewBox="0 0 13 13"><path d="M10 6.5L5.5 11a2.5 2.5 0 0 1-3.5-3.5l5.5-5.5a1.7 1.7 0 0 1 2.4 2.4L4.5 9.5" stroke="#4a78d0" stroke-width="1.4" fill="none"/></svg>
<div class="a mi" style="left:356.5px;top:197.5px">附件</div>
<svg class="a" style="left:334.5px;top:215.5px" width="13" height="13" viewBox="0 0 13 13"><rect x="1" y="1.5" width="11" height="10" fill="#fff" stroke="#6e8fcf" stroke-width="1"/><rect x="1" y="1.5" width="11" height="2" fill="#6e8fcf"/><path d="M1 5.5h11M1 8.5h11M4.7 3.5v8M8.3 3.5v8" stroke="#8aa6d8" stroke-width=".8"/></svg>
<div class="a mi" style="left:356.5px;top:215.0px">表格</div>
<svg class="a" style="left:334.5px;top:233.0px" width="13" height="13" viewBox="0 0 13 13"><rect x="2" y="1" width="10" height="11.5" fill="#f4f4f4" stroke="#aaa" stroke-width=".8"/><rect x="1" y="1" width="8" height="7" fill="#d9272e"/><path d="M3 6.5l2-4 2 4" stroke="#fff" stroke-width=".9" fill="none"/></svg>
<div class="a mi" style="left:356.5px;top:232.5px">PDF文件</div>
<svg class="a" style="left:334.5px;top:250.5px" width="13" height="13" viewBox="0 0 13 13"><rect x="1" y="1" width="11" height="11" fill="#ddd" stroke="#888" stroke-width=".8"/><rect x="2.5" y="2.5" width="8" height="8" fill="#5bb04d"/><path d="M2.5 8l3-3 2 2 3-3v6.5h-8z" fill="#e9c64c"/><path d="M5 3l1 5" stroke="#d44" stroke-width="1"/></svg>
<div class="a mi" style="left:356.5px;top:250.0px">百度地图</div>
<svg class="a" style="left:334.5px;top:268.0px" width="13" height="13" viewBox="0 0 13 13"><rect x="1" y="2" width="11" height="10.5" fill="#fff" stroke="#9aa" stroke-width=".8"/><rect x="1" y="2" width="11" height="3" fill="#e04a3f"/><path d="M3 7h1M6 7h1M9 7h1M3 9.5h1M6 9.5h1M9 9.5h1" stroke="#999" stroke-width="1"/></svg>
<div class="a mi" style="left:356.5px;top:267.5px">日期</div>
<svg class="a" style="left:334.5px;top:285.5px" width="13" height="13" viewBox="0 0 13 13"><circle cx="6.5" cy="6.5" r="5.5" fill="#f2f2f2" stroke="#777" stroke-width="1"/><path d="M6.5 3v3.5H4" stroke="#444" stroke-width="1" fill="none"/></svg>
<div class="a mi" style="left:356.5px;top:285.0px">时间</div>
<svg class="a" style="left:334.5px;top:303.0px" width="13" height="13" viewBox="0 0 13 13"><text x="6.5" y="11" font-size="12" text-anchor="middle" fill="#2f6fd6" font-family="Liberation Sans">Ω</text></svg>
<div class="a mi" style="left:356.5px;top:302.5px">特殊符号</div>
<svg class="a" style="left:334.5px;top:320.5px" width="13" height="13" viewBox="0 0 13 13"><text x="6.5" y="11" font-size="14" text-anchor="middle" fill="#222" font-family="Liberation Serif">π</text></svg>
<div class="a mi" style="left:356.5px;top:320.0px">公式编辑器</div>
<svg class="a" style="left:334.5px;top:338.0px" width="13" height="13" viewBox="0 0 13 13"><path d="M1 6.5h11" stroke="#333" stroke-width="1.1"/></svg>
<div class="a mi" style="left:356.5px;top:337.5px">分割线</div>
<svg class="a" style="left:334.5px;top:355.5px" width="13" height="13" viewBox="0 0 13 13"><rect x="2" y="1" width="10" height="11.5" fill="#f4f4f4" stroke="#aaa" stroke-width=".8"/><path d="M5 5L2.5 7 5 9M8 5l2.5 2L8 9" stroke="#6b8fd3" stroke-width=".9" fill="none"/></svg>
<div class="a mi" style="left:356.5px;top:355.0px">代码</div>
<svg class="a" style="left:457.5px;top:358.5px" width="4" height="6" viewBox="0 0 4 6"><path d="M0 0l4 3-4 3z" fill="#333"/></svg>
<svg class="a" style="left:338.5px;top:657.5px" width="11" height="12" viewBox="0 0 11 12"><rect x=".5" y=".5" width="10" height="11" fill="#fff" stroke="#888" stroke-width="1"/><path d="M2.5 3.5h6M2.5 5.5h6M2.5 7.5h6" stroke="#888" stroke-width=".9"/></svg>
<svg class="a" style="left:363.5px;top:658px" width="12" height="12" viewBox="0 0 12 12"><path d="M1 .5h10M1 11.5h10M2 1v3h8V1M2 11V8h8v3M0 6h12" stroke="#666" stroke-width="1" fill="none"/></svg>
<svg class="a" style="left:389.5px;top:658px" width="11" height="11.5" viewBox="0 0 11 11.5"><rect x=".5" y=".5" width="10" height="10.5" fill="#fff" stroke="#888" stroke-width="1"/><rect x=".5" y=".5" width="10" height="3" fill="#aaa"/><path d="M4 5.5L2.5 7.5 4 9.5M7 5.5l1.5 2L7 9.5" stroke="#555" stroke-width=".8" fill="none"/></svg>
<div class="a nw" style="left:416px;top:657px;font-size:9.5px;line-height:14px;color:#aaa">1363 个字符</div>
<div class="a nw" style="left:1027px;top:657px;font-size:9.5px;line-height:14px;color:#333">页面宽度：</div>
<div class="a" style="left:1075px;top:655px;width:51px;height:17.5px;border:1px solid #dcdcdc"></div>
<div class="a nw" style="left:1079px;top:657px;font-size:9.5px;line-height:14px;color:#666">930px</div>
<svg class="a" style="left:1113.5px;top:660.5px" width="8" height="6" viewBox="0 0 8 6"><path d="M1 1l3 3 3-3" stroke="#555" stroke-width="1.5" fill="none"/></svg>
<div class="a" style="left:1130px;top:312.5px;width:27px;height:126.5px;background:#337ab7;border-radius:3px 0 0 3px"></div>
<div class="a" style="left:1137.3px;top:329.0px;width:11px;font-size:10px;line-height:13px;color:#fff;text-align:center">内</div>
<div class="a" style="left:1137.3px;top:341.7px;width:11px;font-size:10px;line-height:13px;color:#fff;text-align:center">容</div>
<div class="a" style="left:1137.3px;top:354.4px;width:11px;font-size:10px;line-height:13px;color:#fff;text-align:center">检</div>
<div class="a" style="left:1137.3px;top:367.1px;width:11px;font-size:10px;line-height:13px;color:#fff;text-align:center">查</div>
<div class="a" style="left:1138.6px;top:383px;width:10.2px;height:16.5px;border-radius:3px;background:#f0645a;color:#fff;font-size:10px;line-height:16.5px;text-align:center">0</div>
<svg class="a" style="left:1139px;top:409.5px" width="9" height="10" viewBox="0 0 9 10"><path d="M1 1l3.5 4L1 9M4.5 1L8 5 4.5 9" stroke="#fff" stroke-width="1.3" fill="none"/></svg>
<div class="a" style="left:451.5px;top:703.6px;width:90.0px;height:6px;border-radius:3px;background:#d5d5d5"></div>
<div class="a" style="left:546px;top:703.6px;width:69px;height:6px;border-radius:3px;background:#2e6da4"></div>
<div class="a" style="left:620px;top:703.6px;width:75px;height:6px;border-radius:3px;background:#46b8da"></div>
<div class="a" style="left:700.5px;top:703.6px;width:115.5px;height:6px;border-radius:3px;background:#4cae4c"></div>
<div class="a" style="left:822px;top:703.6px;width:51px;height:6px;border-radius:3px;background:#d43f3a"></div>
<div class="a" style="left:877.5px;top:703.6px;width:78.5px;height:6px;border-radius:3px;background:#46b8da"></div>
<div class="a" style="left:961.5px;top:703.6px;width:53.0px;height:6px;border-radius:3px;background:#dddddd"></div>
</div></div>
<div class="a" style="left:586px;top:20px;width:127px;height:30px;background:#000;border-radius:0 0 7px 7px"></div>
<div class="a" style="left:645px;top:24.5px;width:9.5px;height:9.5px;border-radius:50%;background:#141414"></div>
<div class="a" style="left:647.3px;top:26.8px;width:5px;height:5px;border-radius:50%;background:radial-gradient(circle at 60% 45%,#2a5aa0 0,#173056 45%,#0a1424 100%)"></div>
</body></html>
